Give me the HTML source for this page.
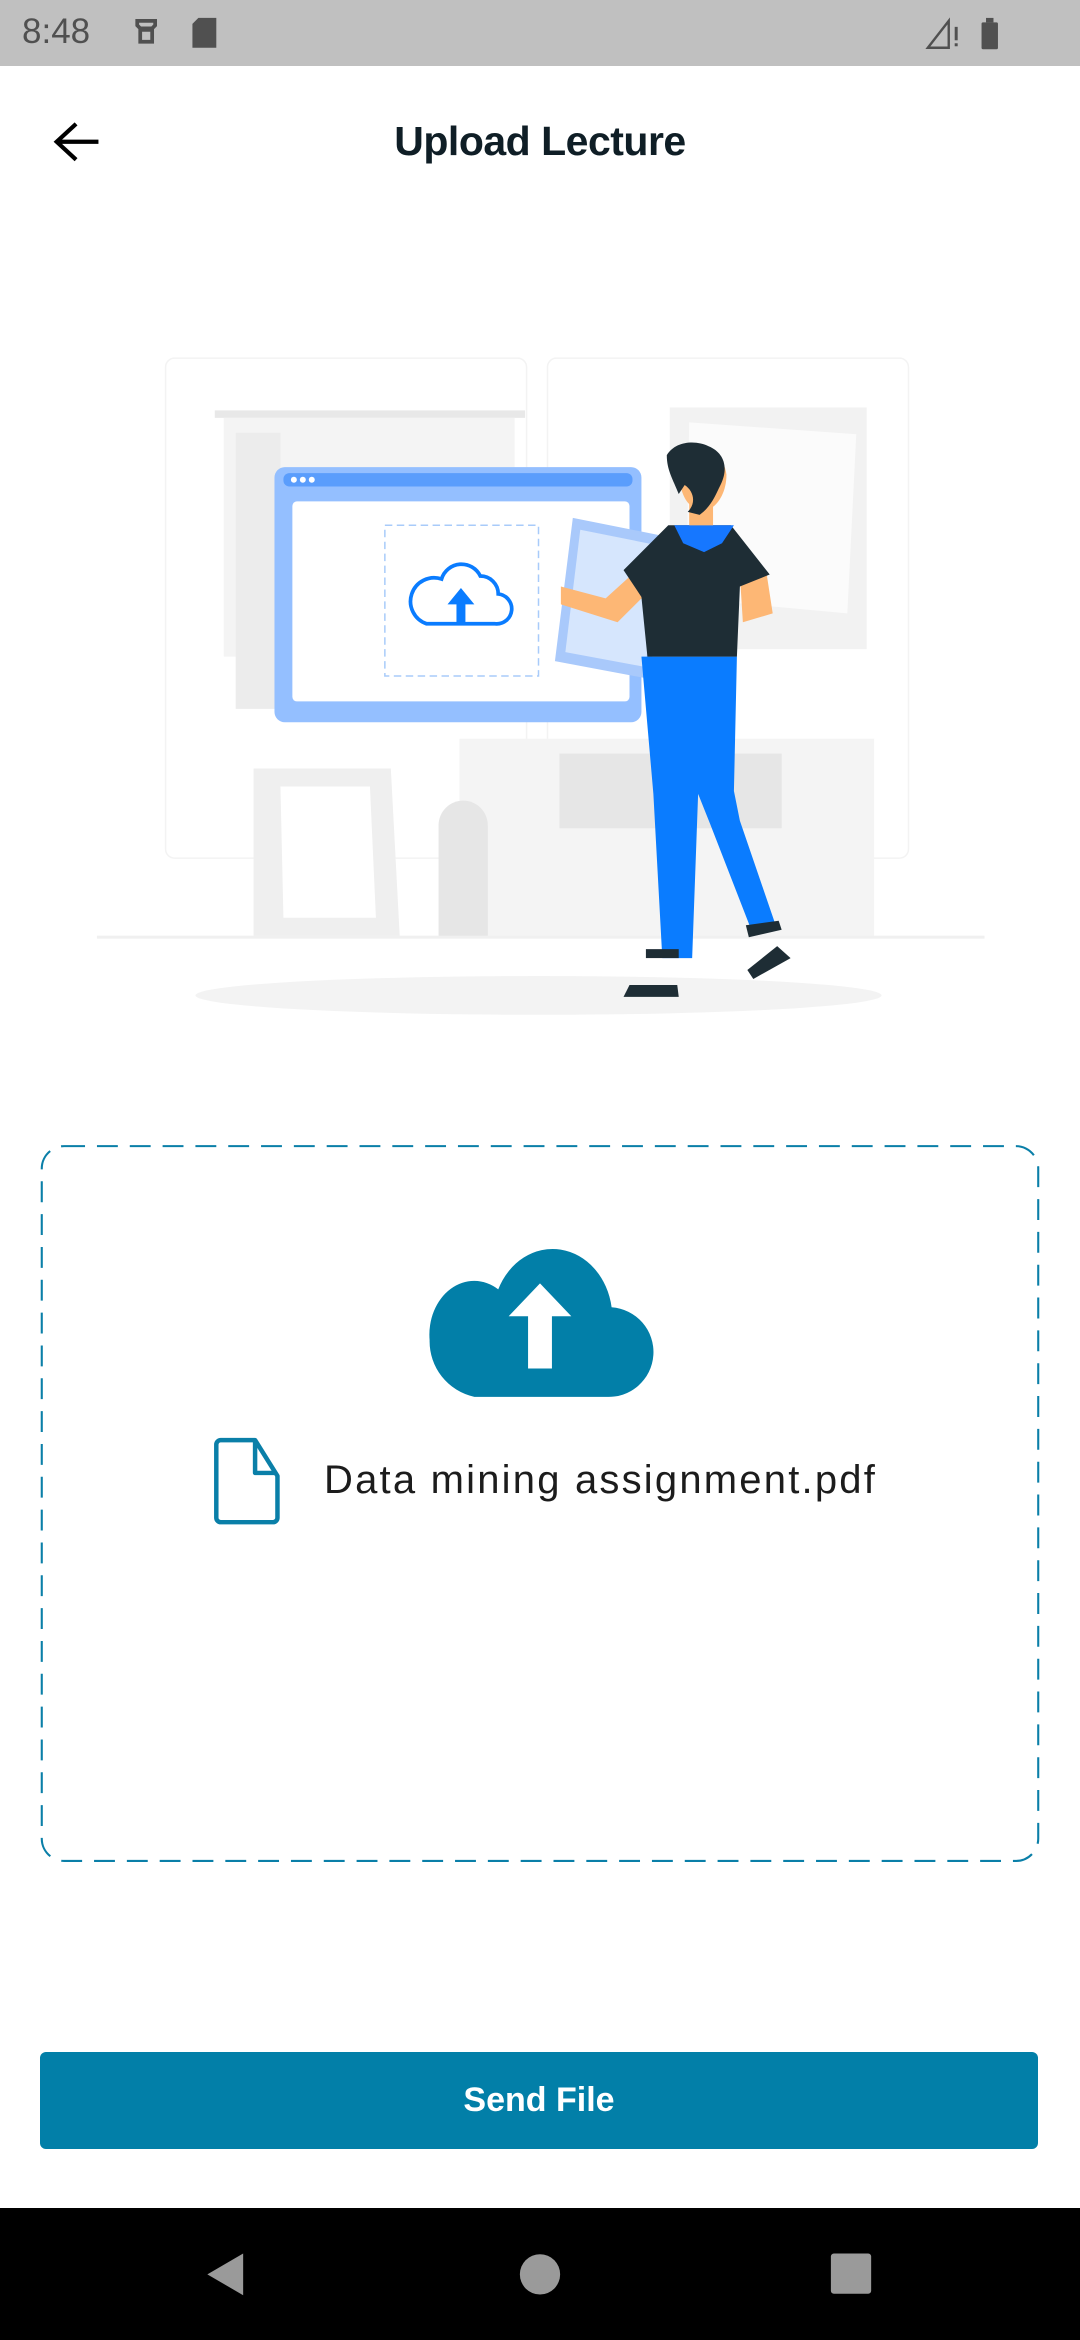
<!DOCTYPE html>
<html><head><meta charset="utf-8"><style>
html,body{margin:0;padding:0;}
body{width:1080px;height:2340px;position:relative;background:#fff;overflow:hidden;font-family:"Liberation Sans",sans-serif;}
.abs{position:absolute;}
</style></head><body>
<div class="abs" style="left:0;top:0;width:1080px;height:66px;background:#c0c0c0"></div>
<div class="abs" style="left:22px;top:12px;font-size:35px;color:#505050;">8:48</div>
<div class="abs" style="left:0;top:2208px;width:1080px;height:132px;background:#000"></div>
<div class="abs" style="left:0;top:118px;width:1080px;text-align:center;font-size:41px;font-weight:bold;color:#0f1e26;letter-spacing:-0.5px;">Upload Lecture</div>
<div class="abs" style="left:324px;top:1458px;font-size:40px;letter-spacing:2.2px;color:#1c1c1c;">Data mining assignment.pdf</div>
<div class="abs" style="left:40px;top:2052px;width:998px;height:97px;background:#027fa8;border-radius:6px;color:#fff;font-weight:bold;font-size:34px;text-align:center;line-height:97px;">Send File</div>
<svg class="abs" style="left:0;top:0" width="1080" height="2340" viewBox="0 0 724 1568" preserveAspectRatio="none">
<path d="M92 14h12v3l-2 2h-8l-2-2z M94 20h8v8h-8z" fill="none" stroke="#505050" stroke-width="2.5"/>
<path d="M133 12h12v20h-16v-16z" fill="#505050"/>
<path d="M622 32l14-18v18z" fill="none" stroke="#505050" stroke-width="1.6"/>
<rect x="640" y="18" width="2" height="9" fill="#505050"/><rect x="640" y="29" width="2" height="2" fill="#505050"/>
<rect x="658" y="15" width="11" height="18" rx="1" fill="#505050"/><rect x="661" y="12" width="5" height="3" fill="#505050"/>
<path d="M66 95H39M51 83L38 95l13 12" fill="none" stroke="#000" stroke-width="2.8"/>
<rect x="111" y="240" width="242" height="335" rx="6" fill="none" stroke="#f3f3f3" stroke-width="1"/>
<rect x="367" y="240" width="242" height="335" rx="6" fill="none" stroke="#f3f3f3" stroke-width="1"/>
<rect x="144" y="275" width="208" height="5" fill="#e8e8e8"/>
<rect x="150" y="280" width="195" height="160" fill="#f4f4f4"/>
<rect x="158" y="290" width="30" height="185" fill="#ececec"/>
<rect x="449" y="273" width="132" height="162" fill="#f2f2f2"/>
<path d="M462 283l112 8-6 120-108-10z" fill="#fbfbfb"/>
<rect x="308" y="495" width="278" height="133" fill="#f4f4f4"/>
<rect x="375" y="505" width="149" height="50" fill="#e6e6e6"/>
<path d="M170 515h92l6 113h-98z" fill="#efefef"/>
<path d="M188 527h60l4 88h-62z" fill="#fff"/>
<path d="M294 628v-75a16 16 0 0 1 33 0v75z" fill="#e6e6e6"/>
<rect x="65" y="627" width="595" height="2" fill="#f0f0f0"/>
<ellipse cx="361" cy="667" rx="230" ry="13" fill="#f3f3f3"/>
<rect x="184" y="313" width="246" height="171" rx="7" fill="#94bfff"/>
<rect x="190" y="317" width="234" height="9" rx="4" fill="#5a9dfc"/>
<circle cx="197" cy="321.5" r="2" fill="#fff"/><circle cx="203" cy="321.5" r="2" fill="#fff"/><circle cx="209" cy="321.5" r="2" fill="#fff"/>
<rect x="196" y="336" width="226" height="134" rx="3" fill="#fff"/>
<rect x="258" y="352" width="103" height="101" fill="none" stroke="#a8cbfa" stroke-width="1" stroke-dasharray="5 3"/>
<path d="M286 418h46a10 10 0 0 0 2-20a12 12 0 0 0-12-12a14 14 0 0 0-26 2a12 12 0 0 0-10 30z" fill="none" stroke="#0a7cff" stroke-width="2.5"/>
<path d="M309 394l-9 11h6v13h6v-13h6z" fill="#0a7cff"/>
<path d="M384 347l60 12-8 96-64-12z" fill="#a9c9fb"/>
<path d="M389 355l50 10-6 82-54-10z" fill="#d6e6fd"/>
<path d="M430 440h64l-2 90 4 20 24 70-16 4-28-72-8-20-4 110h-20l-6-110z" fill="#0a7cff"/>
<rect x="433" y="636" width="22" height="6" fill="#1e2d35"/>
<path d="M500 620l22-3 2 6-22 5z" fill="#1e2d35"/>
<path d="M418 668l4-8 32 0 1 8z" fill="#1e2d35"/>
<path d="M501 650l20-16 9 8-25 14z" fill="#1e2d35"/>
<path d="M376 393l30 8 22-20 8 14-22 22-38-12z" fill="#fdb775"/>
<path d="M496 385l18 0 4 26-20 6z" fill="#fdb775"/>
<path d="M418 382l30-30h42l26 33-20 8-2 47h-60l-4-40z" fill="#1e2d35"/>
<path d="M452 352h40l-8 12-12 6-14-6z" fill="#1677ff"/>
<rect x="462" y="330" width="16" height="22" fill="#fdb775"/>
<path d="M455 312c0 20 6 30 18 30 8-2 14-12 14-24-2-14-12-20-22-18z" fill="#fdb775"/>
<path d="M447 305c6-10 20-10 28-6 10 4 14 14 8 26-4 8-6 14-14 20l-8-2c6-6 4-14-2-18l-4 6c-4-10-8-16-8-26z" fill="#1e2d35"/>
<rect x="28" y="768" width="668" height="479" rx="15" fill="none" stroke="#0a7fa8" stroke-width="1.4" stroke-dasharray="14 8"/>
<path d="M318 936h88a30 30 0 0 0 4-60a40 46 0 0 0-76-12a30 36 0 0 0-46 34a38 38 0 0 0 30 38z" fill="#027fa8"/>
<path d="M362 860l-21 22h13v35h16v-35h13z" fill="#fff"/>
<path d="M148 965h23l15 24v28a3 3 0 0 1-3 3h-35a3 3 0 0 1-3-3v-49a3 3 0 0 1 3-3z M171 966v21h14" fill="none" stroke="#0a7fa8" stroke-width="3" stroke-linejoin="round"/>
<path d="M163 1510v28l-24-14z" fill="#9a9a9a"/>
<circle cx="362" cy="1524" r="13.5" fill="#9a9a9a"/>
<rect x="557" y="1510" width="27" height="27" rx="2" fill="#9a9a9a"/>
</svg>
</body></html>
